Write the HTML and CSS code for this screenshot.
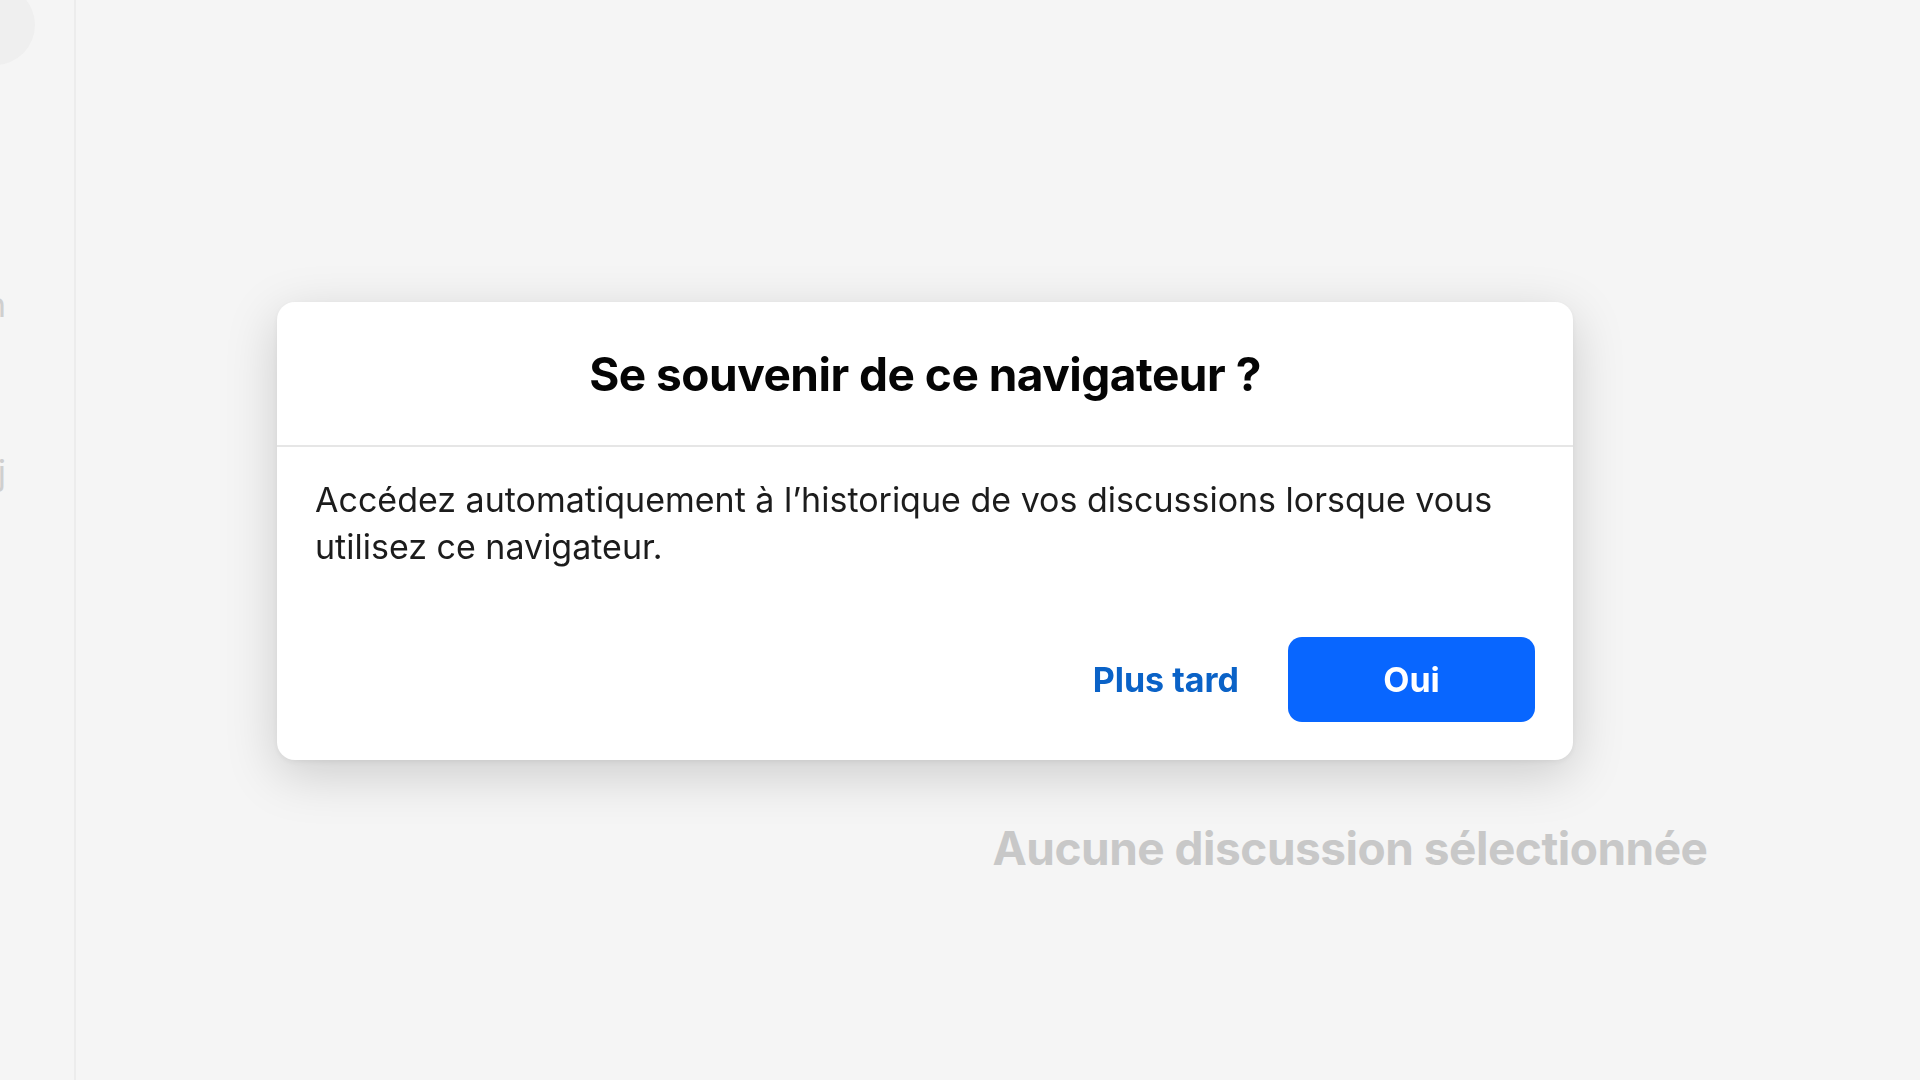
FILE: index.html
```html
<!DOCTYPE html>
<html lang="fr">
<head>
<meta charset="utf-8">
<title>Messenger</title>
<link rel="stylesheet" href="styles.css">
</head>
<body>
<div class="app">
  <aside class="rail">
    <div class="avatar"></div>
    <div class="rail-label rail-label-1">Discussion</div>
    <div class="rail-label rail-label-2">Archivé j</div>
  </aside>
  <div class="list"></div>
  <main class="content">
    <p class="empty">Aucune discussion sélectionnée</p>
  </main>
</div>

<div class="overlay">
  <div class="dialog" role="dialog" aria-labelledby="dlg-title">
    <div class="dialog-header">
      <h2 id="dlg-title" class="dialog-title">Se souvenir de ce navigateur ?</h2>
    </div>
    <div class="dialog-body">
      <p class="dialog-text">Accédez automatiquement à l’historique de vos discussions lorsque vous utilisez ce navigateur.</p>
    </div>
    <div class="dialog-footer">
      <button class="btn btn-link" type="button">Plus tard</button>
      <button class="btn btn-primary" type="button">Oui</button>
    </div>
  </div>
</div>
</body>
</html>
```

FILE: styles.css
```css
html, body {
  margin: 0;
  padding: 0;
  height: 100%;
}

body {
  background: #f5f5f5;
  font-family: Inter, "Noto Sans", "Liberation Sans", sans-serif;
  color: #050505;
  overflow: hidden;
}

.app {
  display: flex;
  height: 100vh;
}

.rail {
  position: relative;
  width: 74px;
  flex: 0 0 74px;
  border-right: 2px solid #ececec;
  overflow: hidden;
}

.avatar {
  position: absolute;
  left: -45px;
  top: -15px;
  width: 80px;
  height: 80px;
  border-radius: 50%;
  background: #efefef;
}

.rail-label {
  position: absolute;
  right: 68px;
  font-size: 34px;
  color: #cfcfcf;
  white-space: nowrap;
}

.rail-label-1 { top: 284px; }
.rail-label-2 { top: 452px; }

.list {
  width: 704px;
  flex: 0 0 704px;
}

.content {
  flex: 1;
  display: flex;
  justify-content: center;
  padding-top: 818px;
}

.empty {
  margin: 0;
  font-size: 46px;
  font-weight: 700;
  letter-spacing: -0.5px;
  line-height: 60px;
  color: #c8c8c8;
  white-space: nowrap;
}

.overlay {
  position: fixed;
  left: 277px;
  top: 302px;
}

.dialog {
  width: 1296px;
  background: #ffffff;
  border-radius: 18px;
  box-shadow: 0 14px 52px rgba(0, 0, 0, 0.17), 0 2px 6px rgba(0, 0, 0, 0.06);
  overflow: hidden;
}

.dialog-header {
  height: 143px;
  display: flex;
  align-items: center;
  justify-content: center;
  border-bottom: 2px solid #e6e6e6;
}

.dialog-title {
  margin: 0;
  font-size: 46px;
  font-weight: 700;
  letter-spacing: -0.5px;
  line-height: 60px;
  color: #050505;
}

.dialog-body {
  padding: 30px 38px 0 38px;
}

.dialog-text {
  margin: 0;
  font-size: 34px;
  line-height: 46.5px;
  color: #1c1c1c;
}

.dialog-footer {
  display: flex;
  justify-content: flex-end;
  align-items: center;
  gap: 25px;
  padding: 67px 38px 38px 38px;
}

.btn {
  font-family: inherit;
  font-size: 34px;
  font-weight: 700;
  border: none;
  height: 85px;
  border-radius: 14px;
  cursor: pointer;
}

.btn-link {
  background: transparent;
  color: #0a62c7;
  padding: 0 24px;
}

.btn-primary {
  width: 247px;
  background: #0866ff;
  color: #ffffff;
}
```
